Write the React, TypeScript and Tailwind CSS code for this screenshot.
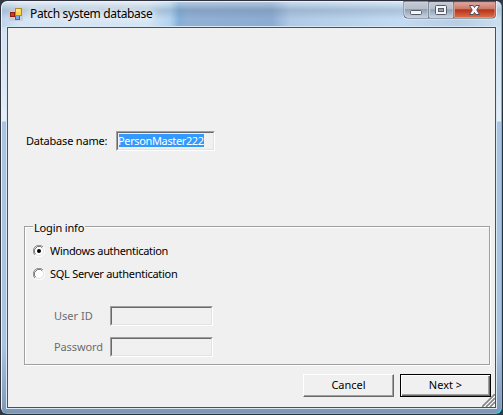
import React from "react";

const uiFont = "font-['Noto_Sans','DejaVu_Sans',sans-serif]";

function AppIcon() {
  return (
    <svg width="14" height="13" viewBox="0 0 14 13" shapeRendering="crispEdges">
      <rect width="14" height="13" fill="#c3c8d0" opacity=".7" />
      <rect x="1" y="4" width="5" height="5" fill="#8f1d12" />
      <rect x="2" y="5" width="3" height="3" fill="#d8371f" />
      <rect x="6" y="0" width="7" height="8" fill="#b88a16" />
      <rect x="7" y="1" width="5" height="6" fill="#ffd247" />
      <rect x="7" y="1" width="4" height="3" fill="#ffe588" />
      <rect x="6" y="8" width="5" height="4" fill="#356ac2" />
      <rect x="7" y="8" width="3" height="3" fill="#75a5ef" />
    </svg>
  );
}

function CaptionButtons() {
  return (
    <svg width="94" height="19" viewBox="0 0 94 19">
      <defs>
        <linearGradient id="glass" x1="0" y1="0" x2="0" y2="1">
          <stop offset="0" stopColor="#c5cbd5" />
          <stop offset=".46" stopColor="#b5bdca" />
          <stop offset=".47" stopColor="#919eb1" />
          <stop offset="1" stopColor="#c2d3e5" />
        </linearGradient>
        <linearGradient id="close" x1="0" y1="0" x2="0" y2="1">
          <stop offset="0" stopColor="#dba99f" />
          <stop offset=".46" stopColor="#ce7361" />
          <stop offset=".47" stopColor="#b3301a" />
          <stop offset="1" stopColor="#dc7048" />
        </linearGradient>
      </defs>
      <path d="M0 0V14Q0 18.5 4 18.5H90Q94 18.5 94 14V0" fill="#e4edf6" />
      <path d="M.5 0V13Q.5 17.5 5 17.5H89Q93 17.5 93 13V0Z" fill="#4d5665" />
      <path d="M1.5 1H25V16.5H5Q1.5 16.5 1.5 13Z" fill="url(#glass)" stroke="#d5dee8" strokeWidth=".8" />
      <path d="M26.5 1.5H50V16.5H26.5Z" fill="url(#glass)" stroke="#d5dee8" strokeWidth=".8" />
      <path d="M51.5 1.5H92V13Q92 16.5 89 16.5H51.5Z" fill="url(#close)" stroke="#e4a497" strokeWidth=".8" />
      <rect x="7.5" y="9.5" width="11" height="4" rx="1" fill="#f5f5f5" stroke="#555d6a" />
      <rect x="32.5" y="4.5" width="11" height="9" rx="1" fill="#f5f5f5" stroke="#555d6a" />
      <rect x="35.5" y="7.5" width="5" height="3" fill="#92a2b9" stroke="#555d6a" />
      <path d="M66.5 4.5H70.2L71.5 6.5L72.8 4.5H76.5L73.8 9L76.5 13.5H72.8L71.5 11.5L70.2 13.5H66.5L69.2 9Z" fill="#f7f7f7" stroke="#584e58" strokeWidth="1" />
    </svg>
  );
}

function Radio({ checked = false, label, spacing }: { checked?: boolean; label: string; spacing: string }) {
  return (
    <label className="flex h-[23px] items-center">
      <svg width="12" height="12" viewBox="0 0 12 12" className="mr-[5px] shrink-0">
        <circle cx="6" cy="6" r="5" fill="#fff" />
        <path d="M1.9 10.1A5.5 5.5 0 0 1 10.1 1.9" fill="none" stroke="#929292" strokeWidth="1" />
        <path d="M2.7 9.2A4.6 4.6 0 0 1 9.2 2.7" fill="none" stroke="#626262" strokeWidth="1" />
        <path d="M10.1 1.9A5.5 5.5 0 0 1 1.9 10.1" fill="none" stroke="#fff" strokeWidth="1" />
        <path d="M9.3 2.8A4.6 4.6 0 0 1 2.8 9.3" fill="none" stroke="#e1e1e1" strokeWidth="1" />
        {checked && <circle cx="6" cy="6" r="2" fill="#000" />}
      </svg>
      <span className={`${spacing} whitespace-nowrap`}>{label}</span>
    </label>
  );
}

function Field({ width, children }: { width: string; children?: React.ReactNode }) {
  return (
    <div className={`${width} h-5 shrink-0 border border-t-[#a0a0a0] border-l-[#a0a0a0] border-r-white border-b-white`}>
      <div className="flex h-full items-start border border-t-[#696969] border-l-[#696969] border-r-[#e3e3e3] border-b-[#e3e3e3] pt-px pl-px">
        {children}
      </div>
    </div>
  );
}

export default function App() {
  return (
    <div className="h-[415px] w-[503px] overflow-hidden bg-[#343842]">
      <div className="flex h-[415px] w-[503px] flex-col rounded-[7px] border border-t-[#30323d] border-r-[#24343e] border-b-[#24343e] border-l-[#30323d] bg-[linear-gradient(180deg,#cedff2_0px,#d7e4f4_60px,#e5eef8_120px,#a9c3e2_121px,#a9c3e2_345px,#8198b5_410px)] pr-1.5 pb-1.5 pl-1.5 shadow-[inset_1px_1px_0_#e8f2fa,inset_-1px_-1px_0_#3bcdf0]">
        <header className="-mx-[5px] mt-px flex h-[25px] shrink-0 items-start rounded-t-[6px] bg-[linear-gradient(180deg,#ffffff55_0px,#637b9340_8px,#637b9330_11px,transparent_17px),linear-gradient(90deg,#bed4ec_0px,#d6e5f4_18px,#d6e5f4_145px,#b3d3ef_168px,#84b0d9_177px,#91b0d4_186px,#8dacd1_270px,#b0cae6_288px,#c3dbf2_400px,#b7cee4_455px,#cadfee_499px)] pl-[7px]">
          <div className="mt-[6px] mr-[7px]"><AppIcon /></div>
          <h1 className={`${uiFont} mt-[3px] w-[124px] text-[12px] leading-[17px] tracking-[-0.34px] whitespace-nowrap text-black [text-shadow:0_0_7px_white,0_0_7px_white]`}>Patch system database</h1>
          <div className="-mt-px mr-[4px] ml-auto"><CaptionButtons /></div>
        </header>
        <main className={`${uiFont} flex h-[381px] shrink-0 flex-col border border-[#465260] bg-[#f0f0f0] text-[11px] leading-[14px] text-black shadow-[0_0_0_1px_#d6e7f6]`}>
          <div className="mt-[103px] ml-[18px] flex h-5 items-center">
            <label className="w-[90px] tracking-[-0.2px] whitespace-nowrap">Database name:</label>
            <Field width="w-[99px]">
              <span className="h-[13px] w-[85px] bg-[#3399ff] leading-[13px] tracking-[-0.36px] whitespace-nowrap text-white"><span className="-ml-px">PersonMaster222</span></span>
            </Field>
          </div>
          <section className="mt-[75px] ml-4 h-[139px] w-[466px] shrink-0 border border-[#a0a0a0] shadow-[1px_1px_0_#fff,inset_1px_1px_0_#fff]">
            <h2 className="-mt-[6px] ml-2 h-[14px] w-[52px] bg-[#f0f0f0] pl-px tracking-[-0.15px] whitespace-nowrap">Login info</h2>
            <div className="mt-[4px] ml-2">
              <Radio checked label="Windows authentication" spacing="tracking-[-0.32px]" />
              <Radio label="SQL Server authentication" spacing="tracking-[-0.28px]" />
            </div>
            <div className="mt-[21px] ml-[29px] flex flex-col gap-[11px] text-[#6d6d6d]">
              <div className="flex h-5 items-center">
                <label className="w-[56px]">User ID</label><Field width="w-[103px]" />
              </div>
              <div className="flex h-5 items-center">
                <label className="w-[56px] tracking-[-0.12px]">Password</label><Field width="w-[103px]" />
              </div>
            </div>
          </section>
          <footer className="mt-[9px] flex h-[32px] pl-[295px]">
            <button className="h-[23px] w-[91px] border border-t-white border-l-white border-r-[#696969] border-b-[#696969] pb-[2px] shadow-[inset_-1px_-1px_0_#a0a0a0]">Cancel</button>
            <button className="ml-[6px] h-[23px] w-[91px] border border-black pb-[2px] shadow-[inset_1px_1px_0_#fff,inset_-1px_-1px_0_#696969,inset_-2px_-2px_0_#a0a0a0]">Next &gt;</button>
            <svg width="13" height="13" viewBox="0 0 13 13" className="mt-[20px] -ml-[9px]">
              <path d="M0 13L13 0M4 13L13 4M8 13L13 8" stroke="#858585" strokeWidth="1.6" />
              <path d="M2 13L13 2M6 13L13 6M10 13L13 10" stroke="#fff" />
            </svg>
          </footer>
        </main>
      </div>
    </div>
  );
}
